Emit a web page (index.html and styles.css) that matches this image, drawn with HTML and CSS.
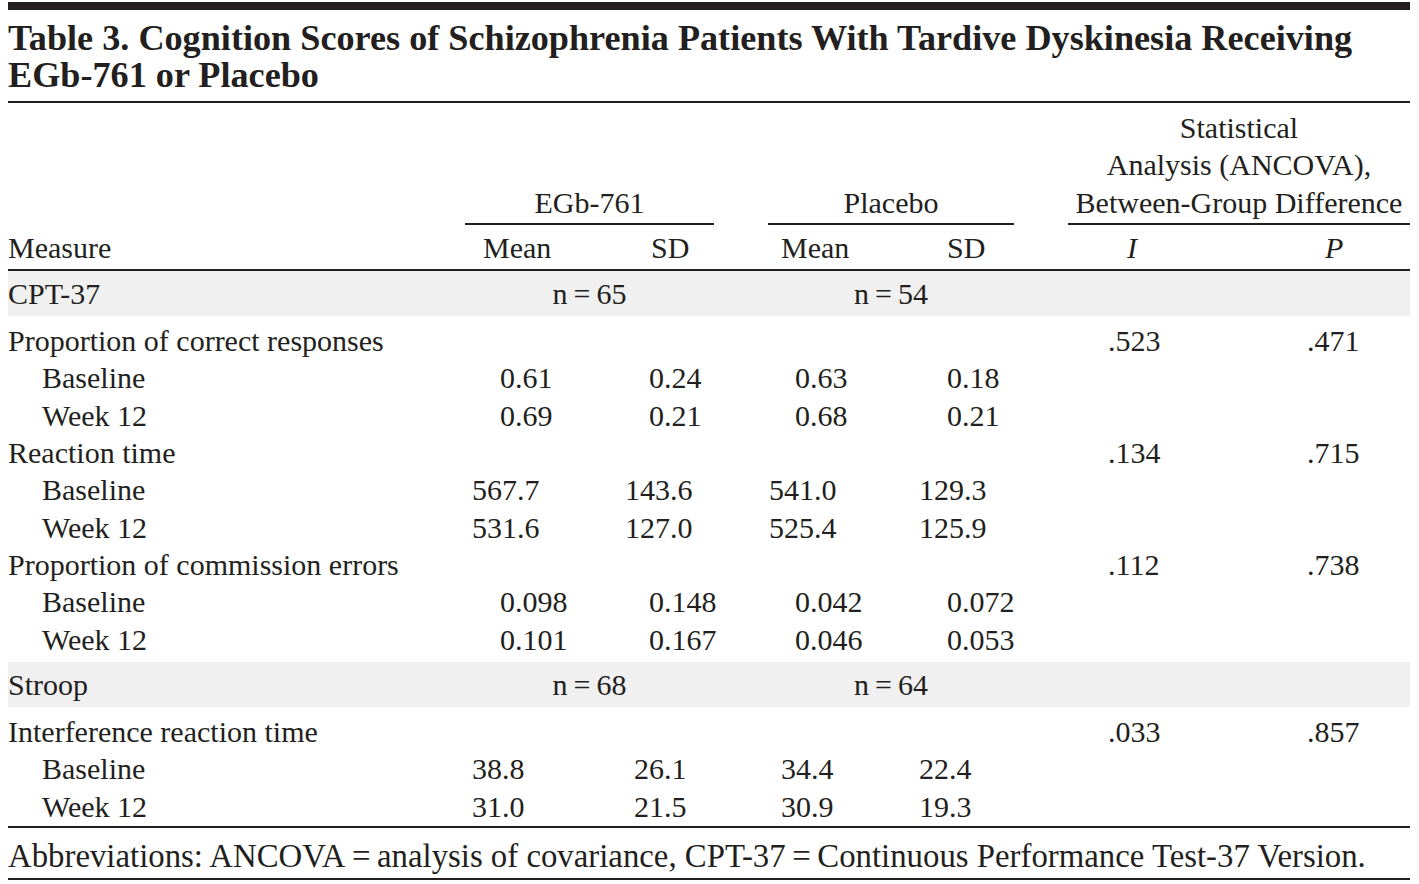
FILE: index.html
```html
<!DOCTYPE html>
<html lang="en">
<head>
<meta charset="utf-8">
<title>Table 3</title>
<link rel="stylesheet" href="styles.css">
</head>
<body>
<div class="table">
  <div class="topbar"></div>
  <h1 class="title">Table 3. Cognition Scores of Schizophrenia Patients With Tardive Dyskinesia Receiving<br>EGb-761 or Placebo</h1>

  <div class="head">
    <div class="grid groups">
      <div class="grp grp-egb">EGb-761</div>
      <div class="grp grp-plc">Placebo</div>
      <div class="grp grp-stat">Statistical<br>Analysis (ANCOVA),<br>Between-Group Difference</div>
    </div>
    <div class="grid colheads">
      <div>Measure</div>
      <div class="i11">Mean</div>
      <div class="i26">SD</div>
      <div class="i12">Mean</div>
      <div class="i28">SD</div>
      <div class="i19"><i>I</i></div>
      <div class="i18"><i>P</i></div>
    </div>
  </div>

  <div class="grid band">
    <div>CPT-37</div>
    <div class="n n-egb">n&#8201;=&#8201;65</div>
    <div class="n n-plc">n&#8201;=&#8201;54</div>
  </div>
  <div class="section">
    <div class="grid row">
      <div>Proportion of correct responses</div>
      <div></div><div></div><div></div><div></div>
      <div>.523</div><div>.471</div>
    </div>
    <div class="grid row">
      <div class="sub">Baseline</div>
      <div class="i28">0.61</div><div class="i24">0.24</div><div class="i26">0.63</div><div class="i28">0.18</div>
      <div></div><div></div>
    </div>
    <div class="grid row">
      <div class="sub">Week 12</div>
      <div class="i28">0.69</div><div class="i24">0.21</div><div class="i26">0.68</div><div class="i28">0.21</div>
      <div></div><div></div>
    </div>
    <div class="grid row">
      <div>Reaction time</div>
      <div></div><div></div><div></div><div></div>
      <div>.134</div><div>.715</div>
    </div>
    <div class="grid row">
      <div class="sub">Baseline</div>
      <div>567.7</div><div>143.6</div><div>541.0</div><div>129.3</div>
      <div></div><div></div>
    </div>
    <div class="grid row">
      <div class="sub">Week 12</div>
      <div>531.6</div><div>127.0</div><div>525.4</div><div>125.9</div>
      <div></div><div></div>
    </div>
    <div class="grid row">
      <div>Proportion of commission errors</div>
      <div></div><div></div><div></div><div></div>
      <div>.112</div><div>.738</div>
    </div>
    <div class="grid row">
      <div class="sub">Baseline</div>
      <div class="i28">0.098</div><div class="i24">0.148</div><div class="i26">0.042</div><div class="i28">0.072</div>
      <div></div><div></div>
    </div>
    <div class="grid row">
      <div class="sub">Week 12</div>
      <div class="i28">0.101</div><div class="i24">0.167</div><div class="i26">0.046</div><div class="i28">0.053</div>
      <div></div><div></div>
    </div>
  </div>

  <div class="grid band">
    <div>Stroop</div>
    <div class="n n-egb">n&#8201;=&#8201;68</div>
    <div class="n n-plc">n&#8201;=&#8201;64</div>
  </div>
  <div class="section last">
    <div class="grid row">
      <div>Interference reaction time</div>
      <div></div><div></div><div></div><div></div>
      <div>.033</div><div>.857</div>
    </div>
    <div class="grid row">
      <div class="sub">Baseline</div>
      <div>38.8</div><div class="i9">26.1</div><div class="i12">34.4</div><div>22.4</div>
      <div></div><div></div>
    </div>
    <div class="grid row">
      <div class="sub">Week 12</div>
      <div>31.0</div><div class="i9">21.5</div><div class="i12">30.9</div><div>19.3</div>
      <div></div><div></div>
    </div>
  </div>

  <div class="foot">Abbreviations: ANCOVA&#8201;=&#8201;analysis of covariance, CPT-37&#8201;=&#8201;Continuous Performance Test-37 Version.</div>
</div>
</body>
</html>
```

FILE: styles.css
```css
html, body {
  background: #ffffff;
}

body {
  margin: 2px 8px 8px 8px;
  font-family: "Liberation Serif", "Times New Roman", serif;
  color: #231f20;
}

.table {
  width: 1402px;
  font-size: 30px;
  line-height: 37.3px;
}

.topbar {
  height: 8px;
  background: #231f20;
}

.title {
  margin: 0;
  padding: 10px 0 7px 0;
  font-size: 36.2px;
  line-height: 37px;
  font-weight: bold;
  white-space: nowrap;
  border-bottom: 2px solid #231f20;
}

.grid {
  display: grid;
  grid-template-columns: 464px 153px 144px 150px 189px 199px 103px;
  white-space: nowrap;
}

.head {
  padding-top: 6px;
}

.groups {
  align-items: end;
}

.grp {
  text-align: center;
  padding-bottom: 2px;
  border-bottom: 2px solid #231f20;
}

.grp-egb {
  grid-column: 2 / 4;
  margin: 0 55px 0 -7px;
}

.grp-plc {
  grid-column: 4 / 6;
  margin: 0 94px 0 -1px;
}

.grp-stat {
  grid-column: 6 / 8;
  margin-left: -40px;
}

.colheads {
  padding: 4px 0 2.7px 0;
  border-bottom: 2px solid #231f20;
}

.band {
  background: #f0f0f0;
  padding: 4px 0;
}

.n {
  text-align: center;
}

.n-egb {
  grid-column: 2 / 4;
  margin: 0 55px 0 -7px;
}

.n-plc {
  grid-column: 4 / 6;
  margin: 0 94px 0 -1px;
}

.section {
  padding: 6px 0 4px 0;
}

.section.last {
  padding-bottom: 1px;
  border-bottom: 2px solid #231f20;
}

.sub {
  padding-left: 34px;
}

.i9 { padding-left: 9px; }
.i11 { padding-left: 11px; }
.i12 { padding-left: 12px; }
.i18 { padding-left: 18px; }
.i19 { padding-left: 19px; }
.i24 { padding-left: 24px; }
.i26 { padding-left: 26px; }
.i28 { padding-left: 28px; }

.foot {
  padding: 10px 0 2.7px 0;
  font-size: 32.8px;
  border-bottom: 2px solid #231f20;
  white-space: nowrap;
}
```
